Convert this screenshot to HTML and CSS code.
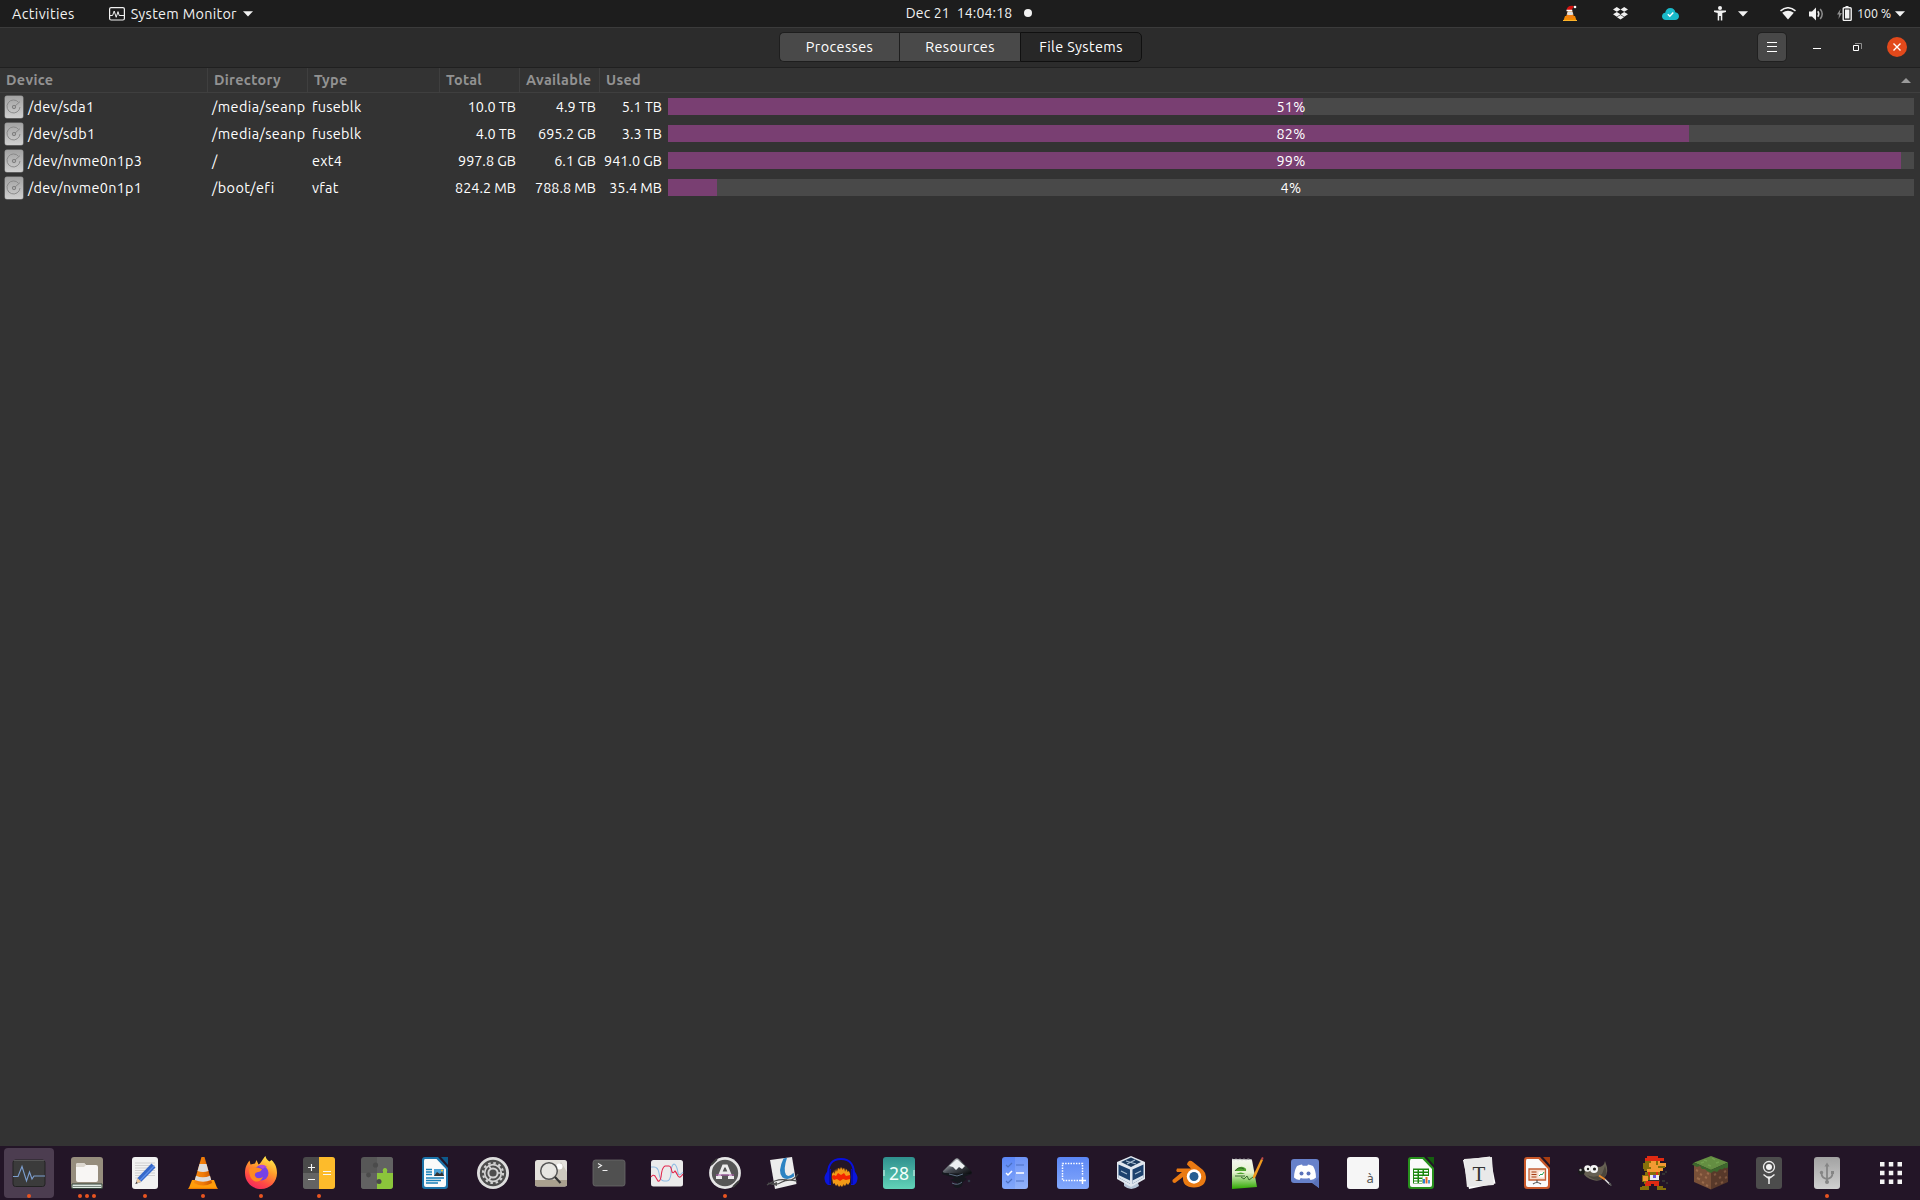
FILE: index.html
```html
<!DOCTYPE html>
<html lang="en">
<head>
<meta charset="utf-8">
<title>System Monitor</title>
<link rel="stylesheet" href="styles.css">
</head>
<body>
<svg class="defs" width="0" height="0" aria-hidden="true">
  <defs>
    <linearGradient id="disk" x1="0" y1="0" x2="0" y2="1"><stop offset="0" stop-color="#a2a2a2"/><stop offset="1" stop-color="#d0d0d0"/></linearGradient>
    <linearGradient id="orange" x1="0" y1="0" x2="1" y2="0"><stop offset="0" stop-color="#f78a10"/><stop offset=".5" stop-color="#f07c08"/><stop offset="1" stop-color="#c95500"/></linearGradient>
    <linearGradient id="fox" x1=".8" y1="0" x2=".3" y2="1"><stop offset="0" stop-color="#fff14f"/><stop offset=".4" stop-color="#ff9d2b"/><stop offset=".75" stop-color="#ff4a45"/><stop offset="1" stop-color="#f2275f"/></linearGradient>
    <linearGradient id="teal" x1="0" y1="0" x2="0" y2="1"><stop offset="0" stop-color="#2f908e"/><stop offset="1" stop-color="#62d3b8"/></linearGradient>
    <linearGradient id="green" x1="0" y1="0" x2="0" y2="1"><stop offset="0" stop-color="#f5f8f0"/><stop offset=".45" stop-color="#e4f2cf"/><stop offset="1" stop-color="#2ea800"/></linearGradient>
    <linearGradient id="ink" x1="0" y1="0" x2="1" y2="1"><stop offset="0" stop-color="#fff"/><stop offset=".5" stop-color="#4a4f57"/><stop offset="1" stop-color="#050608"/></linearGradient>
    <linearGradient id="blue" x1="0" y1="0" x2="0" y2="1"><stop offset="0" stop-color="#5b86f5"/><stop offset="1" stop-color="#83a8fb"/></linearGradient>
    <radialGradient id="flame"><stop offset="0" stop-color="#ff2a00"/><stop offset=".5" stop-color="#ff9500"/><stop offset="1" stop-color="#7a4a10" stop-opacity=".4"/></radialGradient>
    <symbol id="drive" viewBox="0 0 20 24">
      <rect x=".5" y=".5" width="19" height="23" rx="2.5" fill="#8a8a8a"/>
      <rect x="1" y="1" width="18" height="22" rx="2" fill="url(#disk)"/>
      <path d="M14.600 7.400A6.500 6.500 0 1 0 16 12M10.800 11.200L16 6.600" fill="none" stroke="#858585" stroke-width=".9"/>
      <circle cx="10" cy="12" r="1.700" fill="#aaa" stroke="#808080"/>
    </symbol>
    <symbol id="caret" viewBox="0 0 10 6"><path d="M0 .3h10L5 5.600z" fill="#f2f2f2"/></symbol>
  </defs>
</svg>

<header class="topbar">
  <div class="topbar-left">
    <span class="activities">Activities</span>
    <svg class="app-icon" width="16" height="14" viewBox="0 0 16 14"><rect x=".6" y=".6" width="14.800" height="12.400" rx="1.500" fill="none" stroke="#f2f2f2" stroke-width="1.200"/><path d="M1 8.500h2.600L5.200 4l2 6.300L9 4.600l1.200 3.900H15" fill="none" stroke="#f2f2f2"/></svg>
    <span class="app-name">System Monitor</span>
    <svg class="caret" width="10" height="6"><use href="#caret"/></svg>
  </div>
  <div class="clock"><span>Dec 21&nbsp; 14:04:18</span><i class="notice"></i></div>
  <div class="tray">
    <svg class="t-vlc" width="14" height="17" viewBox="0 0 14 17"><path d="M2 11h10l1.500 4.500H.5z" fill="#f08a00"/><path d="M5.300 5h3.400l2.600 7.600q-4.300 1.800-8.600 0z" fill="#f08010"/><path d="M4.700 6.500h4.700l1 3q-3.200 1.100-6.600 0z" fill="#ddd"/><path d="M3.500 5.500Q4-.2 11 1L8.500 5.500z" fill="#d3120f"/><circle cx="12" cy="2" r="1.300" fill="#fff"/><path d="M3.500 5.500h5.800" stroke="#fff" stroke-width="1.500"/><path d="M0 15.500h14" stroke="#ffb52b"/></svg>
    <svg class="t-drop" width="15" height="13" viewBox="0 0 15 13"><path d="M3.800 0L7.500 2.400 3.800 4.800 0 2.400zM11.200 0L15 2.400 11.200 4.800 7.500 2.400zM3.800 4.900l3.700 2.400-3.700 2.400L0 7.300zM11.200 4.900L15 7.300l-3.800 2.400-3.700-2.400zM7.500 8l3.500 2.300L7.500 12.600 4 10.300z" fill="#f0f0f0"/></svg>
    <svg class="t-cloud" width="17" height="12" viewBox="0 0 17 12"><path d="M4 12C1.500 12 0 10.400 0 8.300 0 6.200 1.500 4.800 3.200 4.700 3.700 2 5.700 0 8.400 0c2.800 0 4.500 1.700 5 4.200C15.500 4.500 17 6 17 8.200 17 10.400 15.400 12 13 12z" fill="#19b9c9"/><path d="M5.800 6.200l2 2 3.500-3.700" fill="none" stroke="#fff" stroke-width="1.400"/></svg>
    <svg class="t-acc" width="12" height="15" viewBox="0 0 12 15"><circle cx="6" cy="2" r="2" fill="#f2f2f2"/><path d="M0 4.500h12v1.500L8.300 7v7.500H6.800V10H5.200v4.500H3.700V7L0 6z" fill="#f2f2f2"/></svg>
    <svg class="t-c1" width="10" height="6"><use href="#caret"/></svg>
    <svg class="t-wifi" width="16" height="13" viewBox="0 0 16 13"><path d="M.5 3.800Q8-2.300 15.500 3.800" fill="none" stroke="#f2f2f2" stroke-width="1.500"/><path d="M2.200 5.700Q8 1.700 13.800 5.700L8 12.500z" fill="#f2f2f2"/></svg>
    <svg class="t-vol" width="15" height="14" viewBox="0 0 15 14"><path d="M0 4.500h3L7 .5v13l-4-4H0z" fill="#f2f2f2"/><path d="M8.800 4.200q2 2.800 0 5.600" fill="none" stroke="#e2e2e2" stroke-width="1.500"/><path d="M11.200 2q4 5 0 10" fill="none" stroke="#8d8d8d" stroke-width="1.500"/></svg>
    <svg class="t-bat" width="15" height="15" viewBox="0 0 15 15"><path d="M3.500 3L0 8.500h2L1.500 13 5 7H2.800z" fill="#8d8d8d"/><path d="M8.500 0h3v1.500h-3z" fill="#f2f2f2"/><rect x="6.200" y="1.700" width="8" height="12.700" rx="1" fill="none" stroke="#f2f2f2" stroke-width="1.400"/><path d="M8 3.500h4.400v9H8z" fill="#f2f2f2"/></svg>
    <span class="percent">100 %</span>
    <svg class="t-c2" width="10" height="6"><use href="#caret"/></svg>
  </div>
</header>

<section class="headerbar">
  <nav class="tabs"><button>Processes</button><button>Resources</button><button class="active">File Systems</button></nav>
  <div class="controls">
    <button class="menu"><svg width="10" height="10" viewBox="0 0 10 10"><path d="M0 .5h10M0 4.500h10M0 9.500h10" stroke="#fff"/></svg></button>
    <svg class="min" width="8" height="2"><path d="M0 .5h8" stroke="#fff"/></svg>
    <svg class="max" width="9" height="9" viewBox="0 0 9 9"><path d="M2 .5h6.500V6" fill="none" stroke="#8f8f8f"/><path d="M.5 2.500h5v5h-5z" fill="none" stroke="#fff"/></svg>
    <svg class="close" width="20" height="20" viewBox="0 0 20 20"><circle cx="10" cy="10" r="10" fill="#e2491b"/><path d="M6.500 6.500l7 7M13.500 6.500l-7 7" stroke="#fff" stroke-width="1.400"/></svg>
  </div>
</section>

<main class="table">
  <div class="row head"><span>Device</span><span>Directory</span><span>Type</span><span>Total</span><span>Available</span><span class="last">Used<svg width="10" height="5" viewBox="0 0 10 5"><path d="M0 5h10L5 0z" fill="#9a9a9a"/></svg></span></div>
  <div class="row"><span class="dev"><svg width="20" height="24"><use href="#drive"/></svg>/dev/sda1</span><span class="dir">/media/seanp</span><span>fuseblk</span><span class="num">10.0 TB</span><span class="num">4.9 TB</span><span class="num used">5.1 TB</span><div class="bar"><i style="width:50.96%"></i><b>51%</b></div></div>
  <div class="row"><span class="dev"><svg width="20" height="24"><use href="#drive"/></svg>/dev/sdb1</span><span class="dir">/media/seanp</span><span>fuseblk</span><span class="num">4.0 TB</span><span class="num">695.2 GB</span><span class="num used">3.3 TB</span><div class="bar"><i style="width:81.94%"></i><b>82%</b></div></div>
  <div class="row"><span class="dev"><svg width="20" height="24"><use href="#drive"/></svg>/dev/nvme0n1p3</span><span class="dir">/</span><span>ext4</span><span class="num">997.8 GB</span><span class="num">6.1 GB</span><span class="num used">941.0 GB</span><div class="bar"><i style="width:98.96%"></i><b>99%</b></div></div>
  <div class="row"><span class="dev"><svg width="20" height="24"><use href="#drive"/></svg>/dev/nvme0n1p1</span><span class="dir">/boot/efi</span><span>vfat</span><span class="num">824.2 MB</span><span class="num">788.8 MB</span><span class="num used">35.4 MB</span><div class="bar"><i style="width:3.93%"></i><b>4%</b></div></div>
</main>

<footer class="dock">
  <!-- System Monitor -->
  <div class="item current"><svg viewBox="0 0 40 40"><rect x="4" y="7" width="32" height="26.500" rx="2.500" fill="#3b3b3b" stroke="#222"/><path d="M4.500 7.500h31" stroke="#666" stroke-width=".7"/><path d="M4 23.500h5l4-10 4.500 14.500 3-9 2.500 7 2-3h11" fill="none" stroke="#7d9fd0" stroke-width="1.100"/></svg><em></em></div>
  <!-- Files -->
  <div class="item"><svg viewBox="0 0 40 40"><rect x="4" y="4" width="32" height="32" rx="3" fill="#968d7d"/><path d="M5 31h30v4.500H5z" fill="#dfe9e2" stroke="#34443b"/><path d="M6 33.500h28" stroke="#34443b" stroke-width=".6"/><path d="M9 12q0-2 2-2h6l2 2h10q2 0 2 2v13q0 2-2 2H11q-2 0-2-2z" fill="#f8f6f4"/><path d="M9 14v-2q0-2 2-2h6l2 2-2 2z" fill="#ddd8d0"/></svg><em></em><em></em><em></em></div>
  <!-- Text editor -->
  <div class="item"><svg viewBox="0 0 40 40"><rect x="7" y="4" width="26" height="32" rx="3" fill="#f2f2f2"/><path d="M10 10h20M10 12.500h20M10 15h20M10 17.500h20M10 20h20M10 22.500h20M10 25h9" stroke="#c8c8c8" stroke-width=".8"/><path d="M10.500 31l2-6L26.500 10.500l4 4L16 29z" fill="#3568c9"/><path d="M15 27.500L29 13" stroke="#5d8ee8" stroke-width="1.300"/><path d="M10.500 31l2-6 3.800 3.800z" fill="#eec89c"/><path d="M10.500 31l.8-2.200 1.400 1.300z" fill="#333"/></svg><em></em></div>
  <!-- VLC -->
  <div class="item"><svg viewBox="0 0 40 40"><path d="M9 27h22l3.500 9h-29z" fill="#ff9d0b"/><path d="M5.500 34.800h29V36h-29z" fill="#f07f00"/><path d="M18.500 4h3l7.500 26q-9 5-18 0z" fill="url(#orange)"/><path d="M16.500 11h7l2 7q-5.500 2.200-11 0z" fill="#dcdcdc"/><path d="M13 22.800q7 3 14 0l1.200 4.200q-8.200 3.500-16.400 0z" fill="#dcdcdc"/></svg><em></em></div>
  <!-- Firefox -->
  <div class="item"><svg viewBox="0 0 40 40"><path d="M4 20C4 14 6 11 8.500 7.500l1 4 4.500-1 1.500-3.500 2 4.500c2.500-1 3.500-5 7-8.500.5 3 2 4 4 5.500l2-1.500C35 11 36 16 36 20c0 9-7 16-16 16S4 29 4 20z" fill="url(#fox)"/><circle cx="20" cy="20" r="7.500" fill="#7541e5"/><path d="M8 16q5-3 10-1l3 1q-1 3-4 3-4 1-3 4 2 4 8 1-3 6-9 4-5-3-5-12z" fill="#ff8a22"/><path d="M17 13q5-3 9 1-3 0-4 2z" fill="#b04bd8"/></svg><em></em></div>
  <!-- Calculator -->
  <div class="item"><svg viewBox="0 0 40 40"><rect x="4" y="4" width="32" height="32" rx="3" fill="#4a4a4a"/><path d="M4 20h16v16H7q-3 0-3-3z" fill="#636363"/><path d="M20 4h13q3 0 3 3v26q0 3-3 3H20z" fill="#fdbb2b"/><path d="M9 14.500h7M12.500 11v7M9 26.500h7M24 18.500h8M24 21.500h8" stroke="#f5f5f5" stroke-width="1.100"/></svg><em></em></div>
  <!-- Extensions -->
  <div class="item"><svg viewBox="0 0 40 40"><rect x="4" y="4" width="32" height="32" rx="3" fill="#575757"/><path d="M20 4h13q3 0 3 3v13H20z" fill="#626262"/><path d="M4 20h16v16H7q-3 0-3-3z" fill="#626262"/><path d="M20 20h6v-1.500a2.300 2.300 0 1 1 4 0V20h6v13q0 3-3 3H20z" fill="#8bc53b"/><circle cx="18.500" cy="12" r="2.600" fill="#4b4b4b"/><circle cx="11.500" cy="22" r="2.400" fill="#4b4b4b"/><circle cx="22" cy="28.500" r="2.500" fill="#4a4a4a"/></svg></div>
  <!-- LibreOffice Writer -->
  <div class="item"><svg viewBox="0 0 40 40"><path d="M10 4h13l10 11v18q0 3-3 3H10q-3 0-3-3V7q0-3 3-3z" fill="#1c74aa"/><path d="M26 4h7v8z" fill="#0d5a8c"/><path d="M10 6h11.500L31 16v16q0 2-2 2H11q-2 0-2-2V8q0-2 1-2z" fill="#fafafa"/><path d="M11 16.500h6M11 19h6M11 21.500h6M11 25h18M11 27.500h15M11 30h12" stroke="#177fb8" stroke-width="1.300"/><path d="M19 16h10v7H19z" fill="#4ba0d5"/><path d="M19 23l3-4 3 2 2-2 2 4z" fill="#333"/><circle cx="27" cy="17.500" r="1" fill="#ffc324"/></svg></div>
  <!-- Settings -->
  <div class="item"><svg viewBox="0 0 40 40"><circle cx="20" cy="20" r="16" fill="#dedede"/><circle cx="20" cy="20" r="13.200" fill="#4d4d4d"/><circle cx="20" cy="20" r="10" fill="none" stroke="#d2d2d2" stroke-width="2.200" stroke-dasharray="2.500 2.740"/><circle cx="20" cy="20" r="8.300" fill="none" stroke="#d2d2d2" stroke-width="1.700"/><circle cx="20" cy="20" r="4.600" fill="none" stroke="#d2d2d2" stroke-width="2"/><path d="M24 20h4.500M18 16l-2.300-3.800M18 24l-2.300 3.800" stroke="#d2d2d2" stroke-width="1.700"/></svg></div>
  <!-- Image viewer -->
  <div class="item"><svg viewBox="0 0 40 40"><rect x="4" y="7" width="32" height="26.500" rx="2.500" fill="#e4e1dc"/><path d="M18 27L30 9l6 10v8z" fill="#cdc8be"/><path d="M4 27h32v4q0 2.500-2.500 2.500h-27Q4 33.500 4 31z" fill="#aaa18f"/><circle cx="28.500" cy="13.500" r="3" fill="#fff"/><circle cx="18" cy="18" r="8.300" fill="#e8e6e3" fill-opacity=".85" stroke="#555" stroke-width="1.500"/><path d="M24 24l5.500 6" stroke="#333" stroke-width="2.200"/></svg></div>
  <!-- Terminal -->
  <div class="item"><svg viewBox="0 0 40 40"><rect x="4" y="7" width="32" height="26" rx="2.500" fill="#505050" stroke="#696969" stroke-width=".8"/><path d="M9 10.500l3.500 2L9 14.700M13.500 17.500h5" fill="none" stroke="#eee" stroke-width="1.100"/></svg></div>
  <!-- Power statistics -->
  <div class="item"><svg viewBox="0 0 40 40"><rect x="4" y="7" width="32" height="26.500" rx="2.500" fill="#ebebeb"/><path d="M4 14h3q4 0 5 6 1 8 5 8h3q3 0 4-7 0-9 3-10 3 1 4 9 1 4 5-1" fill="none" stroke="#8fbbe2" stroke-width="1.100"/><path d="M4 24q2-3 4-1l3 5q2 1 3-4 1-10 4-11h4q2 0 3 6 1 2 3-1 1 1 3 5 2 3 5-2" fill="none" stroke="#e2254b" stroke-width="1.100"/></svg></div>
  <!-- Software updater -->
  <div class="item"><svg viewBox="0 0 40 40"><circle cx="20" cy="20" r="15.900" fill="#e6e6e6"/><circle cx="20" cy="20" r="13.200" fill="#565656"/><path d="M6 12l6-6M28 34l6-6" stroke="#3d3d3d" stroke-width="1.800"/><path d="M13.500 25L18.500 13h3l5 12M11 24.500h6M23 24.500h6M15 20h10" fill="none" stroke="#ececec" stroke-width="2.800"/><path d="M11 22h18" stroke="#b05bb0" stroke-width="1"/></svg><em></em></div>
  <!-- Document viewer -->
  <div class="item"><svg viewBox="0 0 40 40"><path d="M7 7l22-3 4.500 27L12 36z" fill="#ececec"/><path d="M20.500 5.500l3.500-.700q-4 12-1 17 3 3 7.500-2l.8 3.500q-7 5-12 1-5-6 1.200-18.800z" fill="#2c83c3"/><path d="M4 32q10-7 20-5 7 1 11-6M5 30q8 3 14-1 5-3 15-1" fill="none" stroke="#4c4c4c" stroke-width="1.300"/><path d="M8 31l6-2v4z" fill="#555"/></svg></div>
  <!-- Audacity -->
  <div class="item"><svg viewBox="0 0 40 40"><ellipse cx="20" cy="24" rx="10" ry="9.500" fill="url(#flame)"/><path d="M11 21l1.500-2 1 2 1.500-4 1 2 1.500-4 1.500 2 1-3 1.500 3 1.500-2 1 4 1.500-3 1 3 1.500-1 1 3v8l-2 3-1.500-2-1.500 3-1.500-2-1.500 3-1.500-2-1.500 2-1.500-3-1.500 2-1.500-3-1.500 1z" fill="#f39a17"/><path d="M11 23l2-1 2 1 2-3 3 2 3-2 2 3 4-1v4l-4 1-3-1-3 2-3-2-3 1-2-2z" fill="#f32600"/><path d="M7 24Q6 6 20 6t13 18" fill="none" stroke="#0810df" stroke-width="2"/><path d="M10 16v16H7q-4-3-3.500-8Q5 18 10 16zM30 16v16h3q4-3 3.500-8Q35 18 30 16z" fill="#0a15dc"/><path d="M9 17v14M31 17v14" stroke="#03077a"/></svg></div>
  <!-- Calendar -->
  <div class="item"><svg viewBox="0 0 40 40"><rect x="4" y="4" width="32" height="32" rx="3" fill="url(#teal)"/><path d="M5 17v6M35 17v6" stroke="#ddf7f0" stroke-width="1"/><text x="20" y="26.500" class="cal" text-anchor="middle">28</text></svg></div>
  <!-- Inkscape -->
  <div class="item"><svg viewBox="0 0 40 40"><path d="M17 7q3-3.500 6 0l11 11q3 3-2 4l-5 2 3 2-4 3-1 4q-5 4-9 0l5-3-8-3 5-2-10-3q-5-1-2-4z" fill="#15181e"/><path d="M17 7q3-3.500 6 0l11 11q2 3-3 3l-21-1q-5 0-4-2z" fill="url(#ink)"/><path d="M12 13l7-6q1-1 2 0l7 6-3 3-3-2-3 3-3-3z" fill="#edf0f2"/><path d="M12 21l8 2 6-2M15 30q6 3 10-1" fill="none" stroke="#5b6c80"/><circle cx="32" cy="28" r="1.300" fill="#303945"/></svg></div>
  <!-- To Do -->
  <div class="item"><svg viewBox="0 0 40 40"><rect x="7" y="4" width="26" height="32" rx="3" fill="url(#blue)"/><path d="M20 4h10q3 0 3 3v26q0 3-3 3H20z" fill="#fff" fill-opacity=".12"/><path d="M11 12l2 2 4-4M21 12h8M11 28l2 2 4-4M21 28h8" fill="none" stroke="#4c70c2" stroke-width="1.200"/><path d="M11 20l2 2 4-4M21 20h8" fill="none" stroke="#fff" stroke-width="1.500"/></svg></div>
  <!-- Screenshot -->
  <div class="item"><svg viewBox="0 0 40 40"><rect x="4" y="4" width="32" height="32" rx="3" fill="url(#blue)"/><path d="M25 27.500H9.500v-17h20V23" fill="none" stroke="#fff" stroke-width="1.500" stroke-dasharray="1.500 1.200"/><path d="M26 27.500h7M29.500 24v7" stroke="#fff" stroke-width="1.500"/></svg></div>
  <!-- VirtualBox -->
  <div class="item"><svg viewBox="0 0 40 40"><path d="M13 30h14l1 3q-8 6-15 0z" fill="#b6c5d6"/><path d="M6 9l14-6 14 6v17l-14 8-14-8z" fill="#e1e7ef"/><path d="M10 9l10-4.500L30 9l-10 5z" fill="#1d3b5f"/><path d="M7.500 11.500L19 16.500v14.300L7.500 24.500zM21.500 16.500L32.500 11.500v13l-11 6.300z" fill="#1c416e"/><path d="M7.500 22l11.500 5.500v3.300l-11.500-6.300zM21.500 27.500l11-5.500v2.500l-11 6.300z" fill="#dce5ee"/><path d="M10 18l6 3M24 21l6-3M15 8l10 3M24 7l-8 4" stroke="#a9bed2" stroke-width="1.200"/></svg></div>
  <!-- Blender -->
  <div class="item"><svg viewBox="0 0 40 40"><path d="M20 8q2-.7 4 1l10 8q3 3 3 7 0 10-12 10.500Q13 34 14 24L6 30q-3 0-2.500-3L13 19H8q-1.500-1.500 0-3.500h14l-4-4q0-2 2-3.500z" fill="#ea7a12"/><circle cx="25" cy="23.500" r="7.200" fill="#fff"/><circle cx="25" cy="23.500" r="4.500" fill="#255d92"/></svg></div>
  <!-- Notepadqq -->
  <div class="item"><svg viewBox="0 0 40 40"><path d="M5 6l20 1 5 27-25 2z" fill="url(#green)"/><path d="M5 6l2 1 2-1 2 1 2-1 2 1 2-1 2 1 2-1 4 1" fill="none" stroke="#ccc"/><path d="M8 18q4-5 8-4 4 1 3 4zM9 21q5-3 9 0z" fill="#4da32d"/><path d="M8 18q3-5 9-2M8 23h10M14 24l3 2 3-3 2 4 4-3" fill="none" stroke="#2c5e24" stroke-width=".9"/><path d="M26 23l8-17 2 1-7.500 17-2.500 2z" fill="#f09a1e"/><path d="M34 6l1-2 1.500.7-.5 2.300z" fill="#c24949"/></svg></div>
  <!-- Discord -->
  <div class="item"><svg viewBox="0 0 40 40"><path d="M9 6h22q3 0 3 3v26l-7-5H9q-3 0-3-3V9q0-3 3-3z" fill="#6781ca"/><path d="M28 30l6-6v11z" fill="#5a72ba"/><path d="M12 13q3-1.500 5-1.500l.7 1.200h4.600l.7-1.200q2 0 5 1.500 3 5 3 11.500-2 2-5.500 2.500l-1.200-2q-4.300 1-8.600 0l-1.200 2Q11 26.500 9 24.500 9 18 12 13z" fill="#fff"/><circle cx="16.500" cy="20.500" r="2" fill="#5a72ba"/><circle cx="23.500" cy="20.500" r="2" fill="#5a72ba"/></svg></div>
  <!-- Characters -->
  <div class="item"><svg viewBox="0 0 40 40"><rect x="4" y="4" width="32" height="32" rx="3" fill="#f6f6f6"/><text x="23.500" y="30" class="chars">à</text></svg></div>
  <!-- LibreOffice Calc -->
  <div class="item"><svg viewBox="0 0 40 40"><path d="M10 4h13l10 11v18q0 3-3 3H10q-3 0-3-3V7q0-3 3-3z" fill="#27901c"/><path d="M26 4h7v8z" fill="#155e0f"/><path d="M10 6h11.500L31 16v16q0 2-2 2H11q-2 0-2-2V8q0-2 1-2z" fill="#fafafa"/><path d="M12 15.500h16v15H12z" fill="#1d870f"/><path d="M13 17.700h3.500M18 17.700h3.500M23 17.700h4M13 20.700h3.500M18 20.700h3.500M23 20.700h4M13 23.700h3.500M18 23.700h3.500M13 26.700h3.500M18 26.700h3M13 29.200h3.500M18 29.200h3" stroke="#fff" stroke-width="1.400"/><path d="M21.500 23h8v8h-8z" fill="#fff"/><path d="M22 26h2v4.500h-2z" fill="#2f7fd0"/><path d="M24.500 24h2v6.500h-2z" fill="#e36523"/><path d="M27 27h2v3.500h-2z" fill="#4ba0d5"/></svg></div>
  <!-- Font viewer -->
  <div class="item"><svg viewBox="0 0 40 40"><path d="M4 7l27-3.500 5.500 27L10 36z" fill="#fff"/><path d="M6 5h28v28H7z" fill="#e9e9e9" transform="rotate(-4 20 20)"/><text x="20" y="28" class="tee" text-anchor="middle">T</text></svg></div>
  <!-- LibreOffice Impress -->
  <div class="item"><svg viewBox="0 0 40 40"><path d="M10 4h13l10 11v18q0 3-3 3H10q-3 0-3-3V7q0-3 3-3z" fill="#c9582a"/><path d="M26 4h7v8z" fill="#a63c10"/><path d="M10 6h11.500L31 16v16q0 2-2 2H11q-2 0-2-2V8q0-2 1-2z" fill="#fafafa"/><path d="M12 16h16.500v11H12z" fill="#f7dccb" stroke="#c45e35" stroke-width="1.300"/><path d="M14.500 19h5M14.500 21.500h5M14.500 24h5" stroke="#a63c10" stroke-width="1.200"/><path d="M21.500 18.500h5.500v6h-5.500z" fill="#fff"/><path d="M22 23l2-2 1 1 2-3" fill="none" stroke="#28a058"/><path d="M20 27v3M16 31q4-3 8 0" fill="none" stroke="#555" stroke-width="1.200"/></svg></div>
  <!-- GIMP -->
  <div class="item"><svg viewBox="0 0 40 40"><path d="M9 14q4 3 10 1l4-1q6 0 7-6 5 12-1 17-5 4-11 2-8-2-10-8z" fill="#655f52"/><path d="M12 22q8 4 15-1l3-8q3 8-1 12-6 4-13 0z" fill="#4b463c"/><circle cx="6.500" cy="18.500" r="3.300" fill="#1b1b1b"/><circle cx="5.500" cy="17" r="1.200" fill="#bbb"/><circle cx="12.500" cy="15.500" r="3.200" fill="#f4f4f4"/><circle cx="19" cy="16" r="4" fill="#f4f4f4"/><circle cx="13" cy="16" r="1.200" fill="#222"/><circle cx="19.500" cy="16" r="1.600" fill="#222"/><path d="M24 22.500l6 4" stroke="#ec8b2d" stroke-width="2"/><path d="M30 26.500l5 5" stroke="#ddd" stroke-width="1.600"/><path d="M34 30q2 1 2 3" stroke="#555" stroke-width="1.500" fill="none"/></svg></div>
  <!-- Mario -->
  <div class="item"><svg viewBox="0 0 40 40" shape-rendering="crispEdges"><path d="M14 3h11v2h6v3H12V5h2z" fill="#e02a12"/><path d="M12 8h15v2h6v4h-3v4h-3v1H14v-3h-3v-5h1z" fill="#f39a32"/><path d="M12 8h6v2h-2v4h2v2h-4v2h-3v-2h-1v-6h2zM23 8h2v4h-2zM25 13h7v2h-7z" fill="#86700a"/><path d="M12 19h15v4h-2v8H11v-2H9v-7h3z" fill="#86700a"/><path d="M15 19h2v4h6v-4h2v5h-9v-2h-1z" fill="#e02a12"/><path d="M10 23h5v5h-5z" fill="#f39a32"/><path d="M17 22h9v5h-9z" fill="#ececec"/><path d="M20 22h3v3h-3z" fill="#6855dc"/><path d="M15 27h12v2H15z" fill="#333"/><path d="M13 28h13v5h-5v-2h-3v2h-6v-3h1z" fill="#e02a12"/><path d="M9 33h7v4H7v-3h2zM24 33h6v2h3v2h-9z" fill="#86700a"/><path d="M29 20h3v2h-3zM32 18h2v2h-2zM29 27h3v2h-3zM33 29h2v2h-2z" fill="#333"/></svg></div>
  <!-- Minecraft -->
  <div class="item"><svg viewBox="0 0 40 40"><path d="M3 10l17 7v19.500L3 29z" fill="#795038"/><path d="M37 10l-17 7v19.500L37 29z" fill="#58392a"/><path d="M3 9.500L20 3l17 6.500L20 17z" fill="#648e42"/><path d="M3 9.500L20 17l17-7.500v5l-3 1v-1l-3 2-2-.5-3 3-3-1-3 2-4-2-2-2-3 0-2-3-3 1-3-1.500-2-1z" fill="#3c672c"/><path d="M5 17l2 1M9 21l2 1M14 24l2 1M6 25l3 1.500M11 29l2 1M16 20l2 1M15 32l2 1" stroke="#9a6b4c" stroke-width="2"/><path d="M23 22l2-1M28 25l2-1M33 19l2-1M24 31l2-1M30 30l2-1M34 25l2-1" stroke="#7e563f" stroke-width="2"/><path d="M13 7l3 1M21 5l3 2M25 10l3-1M17 12l3 1M10 10l3-1" stroke="#73a04f" stroke-width="1.500"/></svg></div>
  <!-- Passwords and keys -->
  <div class="item"><svg viewBox="0 0 40 40"><rect x="7" y="4" width="26" height="32" rx="3" fill="#4c4c4c"/><circle cx="20" cy="14" r="5.500" fill="none" stroke="#eee" stroke-width="1.300"/><circle cx="20" cy="14" r="3" fill="#f5f5f5"/><path d="M14.500 21.500l4 3h3l4-3M20 24v7" fill="none" stroke="#eee" stroke-width="1.500"/><path d="M17.500 23.500h5L20 27z" fill="#eee"/></svg></div>
  <!-- USB drive -->
  <div class="item"><svg viewBox="0 0 40 40"><rect x="7" y="4" width="26" height="32" rx="3" fill="url(#disk)"/><path d="M20 12v17M20 26q-5.500-1-5.500-6M20 26q5.500-1 5.500-6" fill="none" stroke="#858585" stroke-width="1.800"/><path d="M17.500 13.500L20 9.500l2.500 4z" fill="#858585"/><circle cx="14.500" cy="19.500" r="1.700" fill="#858585"/><path d="M24 18h3v3h-3z" fill="#858585"/><circle cx="20" cy="29" r="2" fill="#858585"/></svg><em></em></div>
  <!-- Application grid -->
  <div class="item grid"><svg viewBox="0 0 40 40"><path d="M9 9h4.500v4.500H9zM17.800 9h4.500v4.500h-4.500zM26.500 9H31v4.500h-4.500zM9 17.700h4.500v4.500H9zM17.800 17.700h4.500v4.500h-4.500zM26.500 17.700H31v4.500h-4.500zM9 26.400h4.500v4.500H9zM17.800 26.400h4.500v4.500h-4.500zM26.500 26.400H31v4.500h-4.500z" fill="#f4f4f4"/></svg></div>
</footer>
</body>
</html>
```
FILE: styles.css
```css
* { box-sizing: border-box; }
body {
  margin: 0;
  width: 1920px;
  height: 1200px;
  overflow: hidden;
  display: flex;
  flex-direction: column;
  background: #333;
  color: #fff;
  font: 14.4px/20px "Ubuntu", "Noto Sans", sans-serif;
  letter-spacing: 0.3px;
}
svg { display: block; flex: none; }
.defs { position: absolute; }
button { font: inherit; letter-spacing: inherit; color: inherit; border: 0; padding: 0; margin: 0; background: none; }

.topbar {
  height: 27px;
  flex: none;
  display: grid;
  grid-template-columns: 1fr auto 1fr;
  align-items: center;
  background: #1d1d1d;
  color: #f2f2f2;
}
.topbar-left { display: flex; align-items: center; padding-left: 12px; }
.activities { letter-spacing: 0.37px; }
.app-icon { margin: 0 6px 0 34px; }
.caret { margin-left: 6px; }
.clock { display: flex; align-items: center; height: 26px; padding: 0 0 1px 18px; font-size: 14px; letter-spacing: 0.18px; }
.notice { width: 8px; height: 8px; border-radius: 50%; background: #f2f2f2; margin: 0 0 0 12px; }
.tray { display: flex; align-items: center; justify-content: flex-end; padding-right: 15px; }
.t-drop { margin-left: 36px; }
.t-cloud { margin-left: 34px; }
.t-acc { margin-left: 35px; }
.t-c1 { margin-left: 12px; }
.t-wifi { margin-left: 32px; }
.t-vol { margin-left: 13px; }
.t-bat { margin-left: 13px; }
.percent { width: 33px; margin: -1px 0 0 5px; font-size: 12.4px; letter-spacing: 0; white-space: nowrap; }
.t-c2 { margin-left: 5px; }

.headerbar {
  height: 41px;
  flex: none;
  display: grid;
  grid-template-columns: 779px 363px 1fr;
  padding-top: 4px;
  background: #2c2c2c;
  border-top: 1px solid #3b3b3b;
  border-bottom: 1px solid #202020;
}
.tabs { grid-column: 2; height: 30px; display: grid; grid-template-columns: 120px 121px 122px; letter-spacing: 0.4px; }
.tabs button { background: #494949; border: 1px solid #1e1e1e; border-right: 0; }
.tabs button:first-child { border-radius: 5px 0 0 5px; }
.tabs .active { background: #272727; border: 1px solid #101010; border-radius: 0 5px 5px 0; }
.controls { display: flex; align-items: center; justify-content: flex-end; height: 30px; padding-right: 13px; }
.menu { width: 28px; height: 28px; border-radius: 4px; background: #484848; display: grid; place-items: center; box-shadow: 0 0 0 1px #202020; }
.min { margin: 4px 0 0 27px; }
.max { margin-left: 32px; }
.close { margin-left: 25px; }

.table { flex: 1; }
.row {
  height: 27px;
  display: grid;
  grid-template-columns: 208px 100px 132px 80px 80px 68px 1fr;
  align-items: center;
}
.row > span { padding-left: 4px; white-space: nowrap; overflow: hidden; }
.row .dev { display: flex; align-items: center; gap: 4px; }
.row .dir { letter-spacing: 0.42px; }
.row .num { padding: 0 4px 0 0; text-align: right; letter-spacing: 0; }
.row .used { padding: 0 6px 0 0; }
.bar { position: relative; height: 17px; margin-right: 6px; background: #494949; }
.bar i { display: block; height: 100%; background: #793f72; }
.bar b { position: absolute; inset: 0; font-weight: 400; line-height: 18.5px; text-align: center; }
.head { height: 25px; border-bottom: 1px solid #3f3f3f; font-weight: 700; color: #929292; }
.head > span { height: 24px; line-height: 25px; padding-left: 6px; border-right: 1px solid #3f3f3f; }
.head > .last { grid-column: 6 / 8; display: flex; align-items: center; justify-content: space-between; padding-right: 9px; border: 0; }

.dock {
  height: 54px;
  flex: none;
  display: flex;
  background: #231527;
}
.item {
  width: 50px;
  height: 50px;
  margin: 2px 4px 0;
  flex: none;
  display: flex;
  flex-wrap: wrap;
  align-content: flex-start;
  justify-content: center;
  column-gap: 3px;
}
.item svg { width: 40px; height: 40px; margin: 5px 5px 0; }
.item em { width: 4px; height: 4px; border-radius: 50%; background: #e95420; margin: 1px 0 0; }
.current { background: #4c3d50; border-radius: 4px; }
.grid { margin-left: 10px; }
.cal { font: 17.5px "Noto Sans", sans-serif; letter-spacing: 0; fill: #f4fffb; }
.chars { font: 13px "Noto Sans", sans-serif; fill: #555; }
.tee { font: 21px "Liberation Serif", serif; letter-spacing: 0; fill: #333; }
```
